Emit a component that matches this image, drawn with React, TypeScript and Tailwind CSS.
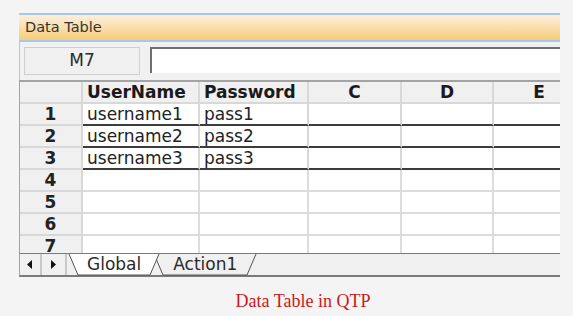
import React from 'react';

const columns = ['', 'UserName', 'Password', 'C', 'D', 'E'];

const rows = [
  ['username1', 'pass1'],
  ['username2', 'pass2'],
  ['username3', 'pass3'],
  [],
  [],
  [],
  [],
];

function TabStrip() {
  return (
    <div className="relative h-full flex-1">
      <svg className="absolute inset-0" width="200" height="22" viewBox="0 0 200 22">
        {/* Action1 tab, behind */}
        <polyline points="87,0 96,21 180,21 189,0" fill="none" stroke="#555" strokeWidth="1" />
        {/* Global tab, active */}
        <polygon points="2,-1 92,-1 83,21 11,21" fill="#ffffff" />
        <polyline points="2,0 11,21 83,21 92,0" fill="none" stroke="#555" strokeWidth="1" />
      </svg>
      <div className="relative flex h-full items-center text-[17px] leading-none text-[#2a2a2a]">
        <span className="ml-[20px]">Global</span>
        <span className="ml-[32px]">Action1</span>
      </div>
    </div>
  );
}

export default function App() {
  return (
    <div
      className="h-[316px] w-[573px] overflow-hidden bg-[#f4f4f4] pl-[19px] pt-[13px]"
      style={{ fontFamily: '"DejaVu Sans", sans-serif' }}
    >
      <div className="w-[541px]">
        {/* title bar */}
        <div className="flex h-[29px] items-center border-y-2 border-[#a8c8e8] bg-gradient-to-b from-[#fcefdc] to-[#f7cc76] pl-[6px] text-[14.5px] text-[#333]">
          Data Table
        </div>

        {/* name box + formula input */}
        <div className="flex h-[38px] border-l border-[#c4c4c4] bg-[#f1f1f1] pt-[5px]">
          <div className="ml-[4px] flex h-[28px] w-[116px] items-center justify-center border border-[#cfcfcf] bg-[#f0f0f0] text-[17px] text-[#2a2a2a]">
            M7
          </div>
          <div className="ml-[10px] h-[26px] flex-1 border-l-2 border-t-2 border-[#6f6f6f] bg-white" />
        </div>

        {/* grid */}
        <div className="h-[173px] overflow-hidden border-l border-t-2 border-[#a3a3a3] bg-white">
          <div className="grid w-max grid-cols-[63px_117px_109px_93px_92px_92px] text-[17px] leading-none text-[#222]">
            {columns.map((c, i) => (
              <div
                key={c + i}
                className={`flex h-[22px] items-center border-b-2 border-r-2 border-[#d8d8d8] bg-[#f0f0f0] font-bold text-[#1a1a1a] ${
                  i < 3 ? 'justify-start pl-[4px]' : 'justify-center'
                }`}
              >
                {c}
              </div>
            ))}
            {rows.map((r, ri) => (
              <React.Fragment key={ri}>
                <div className="flex h-[22px] items-center justify-center border-b-2 border-r-2 border-[#d8d8d8] bg-[#f0f0f0] pt-[1px] font-bold">
                  {ri + 1}
                </div>
                {[0, 1, 2, 3, 4].map((ci) => (
                  <div
                    key={ci}
                    className={`flex h-[22px] items-center border-b-2 border-r-2 pl-[4px] ${
                      ri < 3 ? 'border-b-[#3c3c3c] border-r-[#d8d8d8]' : 'border-[#dcdcdc]'
                    }`}
                  >
                    {r[ci] ?? ''}
                  </div>
                ))}
              </React.Fragment>
            ))}
          </div>
        </div>

        {/* sheet tabs */}
        <div className="flex h-[24px] border-b-2 border-l border-t border-[#7a7a7a] border-l-[#a3a3a3] bg-[#f0f0f0]">
          <div className="flex w-[22px] items-center justify-center border-r-2 border-[#c8c8c8]">
            <svg width="6" height="9" viewBox="0 0 6 9">
              <polygon points="5,0 5,9 0,4.5" fill="#111" />
            </svg>
          </div>
          <div className="flex w-[25px] items-center justify-center border-r-2 border-[#c8c8c8]">
            <svg width="6" height="9" viewBox="0 0 6 9">
              <polygon points="0,0 0,9 5,4.5" fill="#111" />
            </svg>
          </div>
          <TabStrip />
        </div>
      </div>

      <div className="pl-[14px] pt-[11px] text-center text-[18px] text-[#c81a1a]" style={{ fontFamily: '"Liberation Serif", serif' }}>
        Data Table in QTP
      </div>
    </div>
  );
}
